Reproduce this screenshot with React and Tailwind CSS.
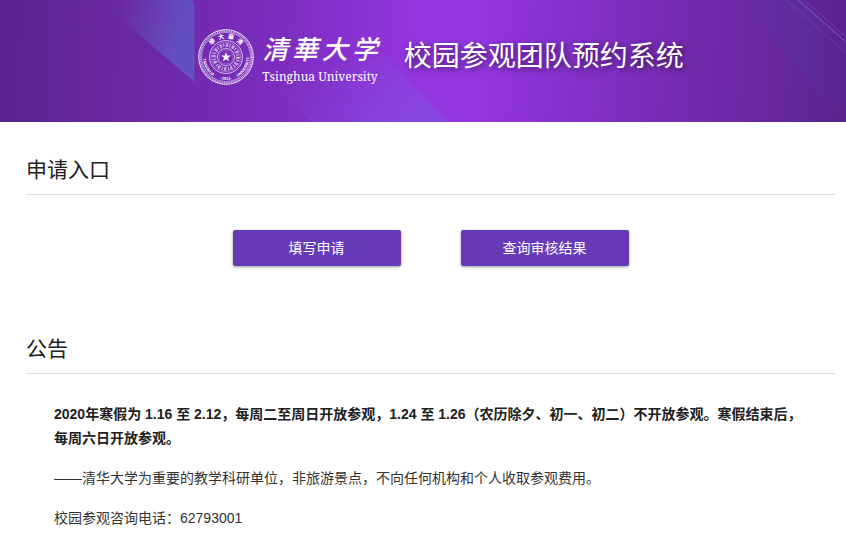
const SPOKES = [0, 30, 60, 90, 120, 150, 180, 210, 240, 270, 300, 330];

function BannerBackground() {
  return (
    <svg
      className="absolute inset-0 w-full h-full"
      viewBox="0 0 846 122"
      preserveAspectRatio="none"
      aria-hidden="true"
    >
      <defs>
        <linearGradient id="banner" gradientUnits="userSpaceOnUse" x1="0" y1="45" x2="846" y2="75">
          <stop offset="0" stopColor="#5b238d" />
          <stop offset="0.16" stopColor="#6a28a4" />
          <stop offset="0.34" stopColor="#7e2dc1" />
          <stop offset="0.5" stopColor="#9437e1" />
          <stop offset="0.56" stopColor="#9437e1" />
          <stop offset="0.66" stopColor="#8731ce" />
          <stop offset="0.8" stopColor="#752bb1" />
          <stop offset="0.93" stopColor="#64279b" />
          <stop offset="1" stopColor="#5b238c" />
        </linearGradient>
        <linearGradient id="wedge" x1="0" y1="0" x2="1" y2="0.3">
          <stop offset="0.15" stopColor="#5d60c4" stopOpacity="0" />
          <stop offset="0.9" stopColor="#5d60c4" stopOpacity="0.7" />
        </linearGradient>
        <linearGradient id="peak" x1="0" y1="0" x2="1" y2="0.6">
          <stop offset="0.2" stopColor="#7a5ae0" stopOpacity="0" />
          <stop offset="1" stopColor="#7a5ae0" stopOpacity="0.4" />
        </linearGradient>
        <linearGradient id="corner" x1="0" y1="0" x2="1" y2="0">
          <stop offset="0" stopColor="#4f3aa5" stopOpacity="0" />
          <stop offset="0.6" stopColor="#4f3aa5" stopOpacity="0.3" />
          <stop offset="1" stopColor="#4f3aa5" stopOpacity="0" />
        </linearGradient>
      </defs>
      <rect width="846" height="122" fill="url(#banner)" />
      <path d="M105 0H192L194.500 5V82L122 20Z" fill="url(#wedge)" />
      <path d="M270 84L385 56L448 122H312Z" fill="url(#peak)" />
      <path d="M350 122L390 78L448 122Z" fill="#7a5ae0" fillOpacity="0.08" />
      <path d="M740 0H800L846 40V122Z" fill="url(#corner)" />
      <g stroke="#8561c9" fill="none">
        <path d="M786 0L846 53" strokeOpacity="0.35" />
        <path d="M798 0L846 42" strokeOpacity="0.5" strokeWidth="1.500" />
        <path d="M804 0L846 37" strokeOpacity="0.4" />
      </g>
    </svg>
  );
}

function Seal() {
  return (
    <svg className="w-14 h-14 shrink-0" viewBox="0 0 56 56" fill="none" stroke="#fff" role="img" aria-label="清华大学校徽">
      <defs>
        <path id="seal-top" d="M9.500 28A18.500 18.500 0 0 1 46.500 28" />
        <path id="seal-left" d="M5.500 22A23 23 0 0 0 22 50.200" />
        <path id="seal-right" d="M34 50.200A23 23 0 0 0 50.500 22" />
        <path id="seal-year" d="M18 48.500A22.800 22.800 0 0 0 38 48.500" />
      </defs>
      <circle cx="28" cy="28" r="27.300" strokeWidth="0.900" />
      <circle cx="28" cy="28" r="25.800" strokeWidth="1.500" strokeDasharray="1 0.800" strokeOpacity="0.75" />
      <circle cx="28" cy="28" r="24.500" strokeWidth="0.600" strokeOpacity="0.8" />
      <circle cx="28" cy="28" r="16.500" strokeWidth="0.900" strokeOpacity="0.75" />
      <circle cx="28" cy="28" r="14.900" strokeWidth="0.500" strokeOpacity="0.6" />
      <circle cx="28" cy="28" r="12" strokeWidth="3.600" strokeDasharray="2 1 1.200 2.083" strokeOpacity="0.6" />
      <circle cx="28" cy="28" r="8.600" strokeWidth="0.800" strokeOpacity="0.75" />
      <circle cx="28" cy="28" r="7" strokeWidth="0.500" strokeOpacity="0.5" />
      {SPOKES.map((angle) => (
        <path key={angle} d="M28 13.200V19.400" strokeWidth="0.600" strokeOpacity="0.6" transform={`rotate(${angle} 28 28)`} />
      ))}
      <path
        d="M28 23L29.250 26.450L32.900 26.500L30 28.700L31.050 32.200L28 30.150L24.950 32.200L26 28.700L23.100 26.500L26.750 26.450Z"
        fill="#fff"
        stroke="none"
      />
      <g fill="#fff" stroke="none">
        <text className="font-['Noto_Sans_CJK_TC',sans-serif] font-bold text-[6px]" textAnchor="middle">
          <textPath href="#seal-top" startOffset="50%">
            {"學\u2002大\u2002華\u2002清"}
          </textPath>
        </text>
        <g className="font-['Liberation_Sans',sans-serif] font-bold text-[4px]" textAnchor="middle">
          <text>
            <textPath href="#seal-left" startOffset="50%">TSINGHUA</textPath>
          </text>
          <text>
            <textPath href="#seal-right" startOffset="50%">UNIVERSITY</textPath>
          </text>
          <text>
            <textPath href="#seal-year" startOffset="50%">-1911-</textPath>
          </text>
        </g>
      </g>
    </svg>
  );
}

function Header() {
  return (
    <header className="relative bg-[#8030c4] text-white">
      <BannerBackground />
      <div className="relative flex items-center justify-center pt-7 pb-9 pl-9">
        <Seal />
        <div className="flex flex-col pl-2">
          <div className="flex justify-between text-[26px] leading-10 italic font-medium font-['Noto_Sans_CJK_SC',sans-serif]">
            <span>清</span>
            <span>華</span>
            <span>大</span>
            <span>学</span>
          </div>
          <div className="text-[12px] leading-[18px] font-['Noto_Serif','Liberation_Serif',serif]">Tsinghua University</div>
        </div>
        <h1 className="pl-[26px] text-[28px] leading-[54px] [text-shadow:2px_2px_6px_rgba(0,0,0,0.6)]">
          校园参观团队预约系统
        </h1>
      </div>
    </header>
  );
}

function Section({ title, children }) {
  return (
    <section>
      <h2 className="pb-2 text-[21px] leading-8 font-normal border-b border-[#dcdcdc]">{title}</h2>
      {children}
    </section>
  );
}

function ActionButton({ children }) {
  return (
    <button
      type="button"
      className="w-[168px] h-9 rounded-[2px] bg-[#673ab7] text-sm text-white shadow-[0_1px_3px_rgba(0,0,0,0.4)] hover:bg-[#5e35b1]"
    >
      {children}
    </button>
  );
}

function App() {
  return (
    <div className="bg-white text-[#212121] font-['Liberation_Sans','Noto_Sans_CJK_SC',sans-serif]" lang="zh-CN">
      <Header />
      <main className="pt-8 pl-[26px] pr-[11px]">
        <Section title="申请入口">
          <div className="flex justify-center gap-[60px] pt-[35px] pb-[67px]">
            <ActionButton>填写申请</ActionButton>
            <ActionButton>查询审核结果</ActionButton>
          </div>
        </Section>
        <Section title="公告">
          <div className="flex flex-col gap-4 px-7 pt-7 pb-4 text-sm leading-6">
            <p className="font-bold">
              2020年寒假为 1.16 至 2.12，每周二至周日开放参观，1.24 至 1.26（农历除夕、初一、初二）不开放参观。寒假结束后，每周六日开放参观。
            </p>
            <p className="text-[#333]">——清华大学为重要的教学科研单位，非旅游景点，不向任何机构和个人收取参观费用。</p>
            <p className="text-[#333]">校园参观咨询电话：62793001</p>
          </div>
        </Section>
      </main>
    </div>
  );
}

export default App;
